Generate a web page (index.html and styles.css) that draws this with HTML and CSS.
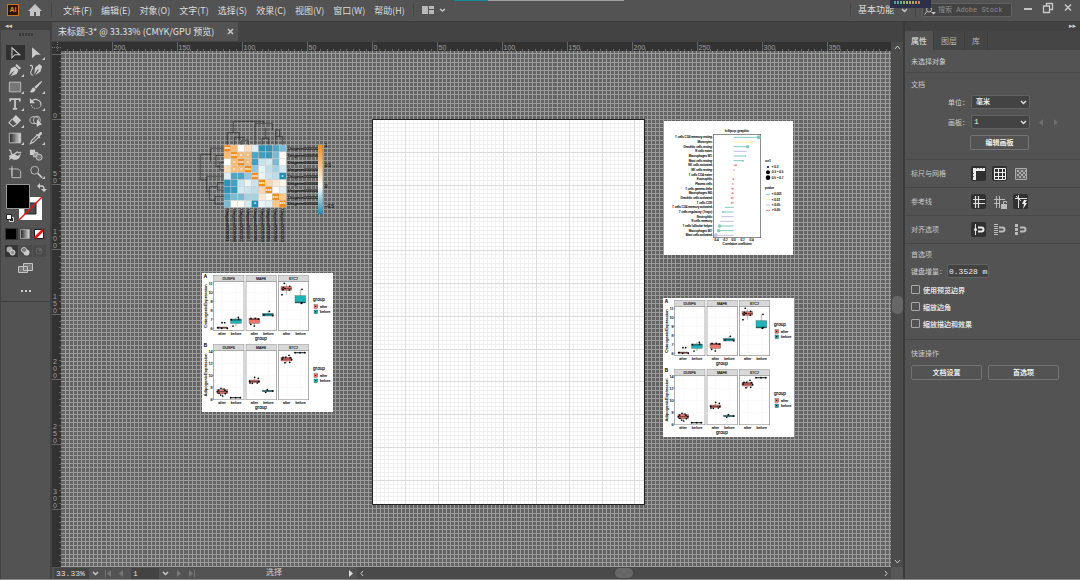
FILE: index.html
```html
<!DOCTYPE html>
<html lang="zh-CN">
<head>
    <meta charset="UTF-8">
    <meta name="viewport" content="width=device-width, initial-scale=1.0">
    <title>未标题-3</title>
    <link rel="stylesheet" href="styles.css">
</head>
<body>
    <div class="app">
        <header class="menubar">
            <span class="logo">Ai</span>
            <button class="plain home" aria-label="主页"><svg class="icon14" viewBox="0 0 14 14"><path fill="#c4c4c4" d="M7 1 0 8h2v5h4V9h2v4h4V8h2z"/></svg></button>
            <span class="divider"></span>
            <nav class="menus">
                <button>文件(F)</button>
                <button>编辑(E)</button>
                <button>对象(O)</button>
                <button>文字(T)</button>
                <button>选择(S)</button>
                <button>效果(C)</button>
                <button>视图(V)</button>
                <button>窗口(W)</button>
                <button>帮助(H)</button>
            </nav>
            <span class="divider"></span>
            <button class="plain arrange" aria-label="排列文档"><svg width="26" height="10" viewBox="0 0 26 10"><path fill="#b8b8b8" d="M1 1h6v8H1zM8 1h5v3H8zM8 5h5v4H8z"/><path class="line" stroke-width="1.5" d="m19 4 2.500 2L24 4"/></svg></button>
            <span class="spacer"></span>
            <span class="divider"></span>
            <button class="workspace-menu">基本功能</button>
            <svg class="icon7 ws-arrow" viewBox="0 0 7 7"><path class="line" stroke-width="1.5" d="m1 2 2.500 2.500L6 2"/></svg>
            <span class="divider"></span>
            <label class="search">
                <svg width="12" height="9" viewBox="0 0 12 9"><circle class="line" cx="5" cy="3.500" r="2.500"/><path class="line" d="M3 5.500.500 8.500"/><path fill="#ccc" d="M7 6h5L9.500 8.500z"/></svg>
                <input type="text" placeholder="搜索 Adobe Stock" aria-label="搜索">
            </label>
            <div class="window-buttons">
                <button aria-label="最小化"><svg class="icon12" viewBox="0 0 12 12"><path fill="#c4c4c4" d="M2 6h8v2H2z"/></svg></button>
                <button aria-label="还原"><svg class="icon12" viewBox="0 0 12 12"><path class="line" stroke-width="1.300" d="M4.500 4V1.500h6v6H8M1.500 4h6v6.500h-6z"/></svg></button>
                <button aria-label="关闭"><svg class="icon12" viewBox="0 0 12 12"><path class="line" stroke-width="1.500" d="m3 2.500 6 6M9 2.500l-6 6"/></svg></button>
            </div>
            <div class="progress-line"></div>
            <div class="meter"><span></span></div>
        </header>

        <aside class="toolbar">
            <div class="toolbar-top">◂◂</div>
            <div class="grip"></div>
            <div class="tools">
                <button class="tool selected" aria-label="选择"><svg viewBox="0 0 16 16"><path class="line" stroke-width="1.200" d="M4.500 2v11.500L8 10h5.500z"/></svg></button>
                <button class="tool more" aria-label="直接选择"><svg viewBox="0 0 16 16"><path fill="#ccc" d="M3.500 1.500V14L8 10h5.500z"/></svg></button>
                <button class="tool more" aria-label="钢笔"><svg viewBox="0 0 16 16"><path fill="#ccc" d="m10 1 5 5-2 1.500L8.500 3zM8 4l4 4-2 4.500L3 15l4-5.500L6.500 9 1 14 3.500 6z"/></svg></button>
                <button class="tool" aria-label="曲率"><svg viewBox="0 0 16 16"><path fill="#ccc" d="m12 1 3 3-2 6-6 4 4-6-1-1-4 6 1-8z"/><path class="line" stroke-width="1.300" d="M1 3c3-1 4 2 2 5s-1 6 2 6"/></svg></button>
                <button class="tool more" aria-label="矩形"><svg viewBox="0 0 16 16"><path fill="#777" stroke="#c6c6c6" d="M1.500 2.500h13v11h-13z"/></svg></button>
                <button class="tool more" aria-label="画笔"><svg viewBox="0 0 16 16"><path fill="#ccc" d="M14 1 6 8l2 2 7-8zM5.500 8.500c-3 0-2 4-5 5 3 2 7 0 7-3z"/></svg></button>
                <button class="tool more" aria-label="文字"><svg viewBox="0 0 16 16"><path class="line" stroke-width="2" d="M2.500 5V2.500h11V5M8 3v10.500M5.500 13.500h5"/></svg></button>
                <button class="tool more" aria-label="旋转"><svg viewBox="0 0 16 16"><path class="line" stroke-width="1.300" d="M3 5a6 6 0 0 1 10.500 5"/><path class="line" stroke-width="1.300" stroke-dasharray="1 1.500" d="M13.500 10A6 6 0 0 1 2.500 9"/><path fill="#ccc" d="M1 1v6h6z"/></svg></button>
                <button class="tool more" aria-label="橡皮擦"><svg viewBox="0 0 16 16"><path fill="#ccc" d="m9 1 6 6-4.500 5-6-6z"/><path fill="none" stroke="#ccc" stroke-width="1.200" d="m4.500 6-3.500 4 5 4.500 4-3"/></svg></button>
                <button class="tool" aria-label="形状生成器"><svg viewBox="0 0 16 16"><ellipse class="line" cx="6" cy="7" rx="5" ry="4"/><ellipse class="line" cx="9" cy="7" rx="4" ry="4.500"/><path fill="#ccc" d="m9 6 6 6-3 .500L9 15z"/></svg></button>
                <button class="tool more" aria-label="渐变"><svg viewBox="0 0 16 16"><defs><linearGradient id="grad"><stop stop-color="#222"/><stop offset="1" stop-color="#ddd"/></linearGradient></defs><path fill="url(#grad)" stroke="#c6c6c6" d="M1.500 2.500h13v11h-13z"/></svg></button>
                <button class="tool more" aria-label="吸管"><svg viewBox="0 0 16 16"><path class="line" stroke-width="1.300" d="m9 5-6 6-1.500 3.500L5 13l6-6"/><path fill="#ccc" d="m8 4 1-1 1.500 1 2-2.500c2-1 3 1 2 2.500L12 6l1 1.500-1 1z"/></svg></button>
                <button class="tool" aria-label="符号喷枪"><svg viewBox="0 0 16 16"><path class="line" stroke-width="1.500" d="M1 2.500c4-1 1 4 4 5s5-4 6-3 1 2 4 0"/><path fill="#ccc" d="M1 9c4-3 7-2 10 0l4-3-2 5c-2 3-7 3-9 1l-3 2 1-3z"/></svg></button>
                <button class="tool" aria-label="混合"><svg viewBox="0 0 16 16"><path fill="#ccc" d="M1 2h6v6H1z"/><path fill="#999" stroke="#ccc" d="M5 5h5v5H5z"/><circle cx="11.500" cy="10.500" r="3.500" fill="#777" stroke="#ccc"/></svg></button>
                <button class="tool" aria-label="画板"><svg viewBox="0 0 16 16"><path class="line" d="M4.500 1v11.500M1 4.500h10.500L14.500 7v7.500h-10v-10"/></svg></button>
                <button class="tool more" aria-label="缩放"><svg viewBox="0 0 16 16"><circle class="line" cx="6.500" cy="6" r="4.500"/><path class="line" stroke-width="2" d="m10 9.500 5 5"/></svg></button>
            </div>
            <!-- 填色与描边 -->
            <svg class="fill-stroke" viewBox="0 0 42 42">
                <path fill="#fff" d="M14 16h23v23H14z"/>
                <path fill="#4c4c4c" stroke="#222" d="M20 22h11v11H20z"/>
                <path stroke="#e11" stroke-width="1.500" d="m14 39 23-23"/>
                <path fill="#000" stroke="#999" d="M1.500 3.500h23v24h-23z"/>
                <path class="line" stroke-width="1.500" d="M34 5h3q2 0 2 4"/>
                <path fill="#ccc" d="m32 5 3-3v6zM36 8h6l-3 3z"/>
                <path fill="#222" stroke="#ddd" d="M4.500 36.500h4v4h-4z"/><path fill="#fff" stroke="#222" d="M1.500 33.500h5v5h-5z"/>
            </svg>
            <div class="modes">
                <button class="on" aria-label="颜色"><svg viewBox="0 0 12 12"><path d="M1 1h10v10H1z"/></svg></button>
                <button aria-label="渐变填色"><svg viewBox="0 0 12 12"><path fill="url(#grad)" stroke="#999" d="M1.500 1.500h9v9h-9z"/></svg></button>
                <button aria-label="无"><svg viewBox="0 0 12 12"><path fill="#fff" stroke="#222" d="M1.500 1.500h9v9h-9z"/><path stroke="#e11" stroke-width="2.500" d="m2 10 8-8"/></svg></button>
            </div>
            <div class="modes">
                <button class="on" aria-label="正常绘图"><svg viewBox="0 0 12 12"><circle cx="4.500" cy="4.500" r="3" fill="#aaa"/><circle cx="7.500" cy="7.500" r="2.500" fill="#999" stroke="#ddd"/></svg></button>
                <button aria-label="背面绘图"><svg viewBox="0 0 12 12"><circle cx="7.500" cy="7.500" r="3" fill="#ccc"/><circle cx="5" cy="5" r="2.500" fill="#777" stroke="#ccc"/></svg></button>
                <button aria-label="内部绘图"><svg viewBox="0 0 12 12"><circle cx="6" cy="6" r="3" fill="none" stroke="#666"/><circle cx="7" cy="5" r="1.500" fill="#666"/></svg></button>
            </div>
            <button class="plain screen-mode" aria-label="更改屏幕模式"><svg width="17" height="12" viewBox="0 0 17 12"><path fill="#777" stroke="#c4c4c4" d="M6.500 1.500h9v7h-9zM1.500 4.500h9v6h-9z"/></svg></button>
            <button class="plain dots" aria-label="编辑工具栏"><svg width="12" height="4" viewBox="0 0 12 4"><path fill="#ccc" d="M1 1h2v2H1zM5 1h2v2H5zM9 1h2v2H9z"/></svg></button>
        </aside>

        <main class="document">
            <div class="tabs">
                <div class="tab">未标题-3* @ 33.33% (CMYK/GPU 预览)<button class="plain" aria-label="关闭文档"><svg class="icon7" viewBox="0 0 7 7"><path class="line" stroke-width="1.500" d="m1 1 5 5M6 1 1 6"/></svg></button></div>
            </div>
            <div class="editor">
                <svg class="corner" viewBox="0 0 9 9"><path stroke="#777" stroke-dasharray="1 1" d="M0 5.500h9M5.500 0v9"/></svg>
                <svg class="ruler" id="rulerX"></svg>
                <svg class="ruler" id="rulerY"></svg>
                <div class="canvas" id="canvas">
                    <svg class="grid" id="grid"></svg>
                    <div class="artboard"><svg class="grid" id="artGrid"></svg></div>
                    <svg class="heatmap" id="heatmap" viewBox="0 0 435 420"></svg>
                    <svg class="boxplot first" viewBox="21 24 393 417"></svg>
                    <svg class="lollipop" id="lollipop" viewBox="27 18 387 402"></svg>
                    <svg class="boxplot second" viewBox="21 24 393 417"></svg>
                </div>
                <div class="vscroll">
                    <svg class="icon7" viewBox="0 0 7 7"><path class="line" d="m1 5 2.500-3L6 5"/></svg>
                    <span class="thumb"></span>
                    <svg class="icon7" viewBox="0 0 7 7"><path class="line" d="m1 2 2.500 3L6 2"/></svg>
                </div>
            </div>
            <footer class="statusbar">
                <input class="zoom-value" type="text" value="33.33%" aria-label="缩放比例">
                <button class="plain" aria-label="缩放列表"><svg class="icon7" viewBox="0 0 7 7"><path class="line" stroke-width="1.500" d="m1 2 2.500 2.500L6 2"/></svg></button>
                <button class="plain" aria-label="首项"><svg class="icon7" viewBox="0 0 7 7"><path fill="#777" d="M0 0h1v7H0zM6 0v7L2 3.500z"/></svg></button>
                <button class="plain" aria-label="上一项"><svg class="icon7" viewBox="0 0 7 7"><path fill="#777" d="M5 0v7L1 3.500z"/></svg></button>
                <input class="page-value" type="text" value="1" aria-label="画板导航">
                <button class="plain" aria-label="画板列表"><svg class="icon7" viewBox="0 0 7 7"><path class="line" stroke-width="1.500" d="m1 2 2.500 2.500L6 2"/></svg></button>
                <button class="plain" aria-label="下一项"><svg class="icon7" viewBox="0 0 7 7"><path fill="#777" d="M2 0v7l4-3.500z"/></svg></button>
                <button class="plain" aria-label="末项"><svg class="icon7" viewBox="0 0 7 7"><path fill="#777" d="M6 0h1v7H6zM1 0v7l4-3.500z"/></svg></button>
                <span class="status-text">选择</span>
                <button class="plain" aria-label="状态菜单"><svg class="icon7" viewBox="0 0 7 7"><path fill="#ddd" d="M2 0v7l4-3.500z"/></svg></button>
                <div class="hscroll">
                    <svg class="icon7" viewBox="0 0 7 7"><path class="line" d="M4 1 2 3.500 4 6"/></svg>
                    <span class="thumb"></span>
                    <svg class="icon7" viewBox="0 0 7 7"><path class="line" d="m3 1 2 2.500L3 6"/></svg>
                </div>
                <span class="size-corner"></span>
            </footer>
        </main>

        <aside class="panel">
            <div class="panel-top">▸▸</div>
            <div class="panel-tabs">
                <button class="active">属性</button>
                <button>图层</button>
                <button>库</button>
            </div>
            <section class="no-selection">未选择对象</section>
            <section class="doc-section">
                <h2>文档</h2>
                <div class="field">
                    <label for="unit">单位：</label>
                    <select id="unit"><option>毫米</option><option>厘米</option></select>
                </div>
                <div class="field">
                    <label for="board">画板：</label>
                    <select id="board" class="mono"><option>1</option></select>
                    <svg class="pager" width="20" height="7" viewBox="0 0 20 7"><path fill="#6e6e6e" d="M4 0v7L0 3.500zM15 0v7l4-3.500z"/></svg>
                </div>
                <button class="btn edit-board">编辑画板</button>
            </section>
            <section class="icon-row">
                <h2>标尺与网格</h2>
                <button class="on" aria-label="标尺"><svg viewBox="0 0 15 15"><path fill="#eee" d="M2 2h12v3H5v9H2z"/><path stroke="#777" d="M5.500 2v1M8.500 2v1M11.500 2v1M2 7.500h1M2 10.500h1"/></svg></button>
                <button class="on" aria-label="网格"><svg viewBox="0 0 15 15"><path fill="none" stroke="#eee" d="M2.500 2.500h11v11h-11zM2 6.500h12M2 10.500h12M6.500 2v12M10.500 2v12"/></svg></button>
                <button aria-label="透明度网格"><svg viewBox="0 0 15 15"><path fill="#666" stroke="#aaa" d="M2.500 2.500h11v11h-11z"/><path stroke="#aaa" stroke-width="2" stroke-dasharray="2 2" d="M4 5h9M4 9h9M6 7h8M6 11h8"/></svg></button>
            </section>
            <section class="icon-row">
                <h2>参考线</h2>
                <button class="on" aria-label="显示参考线"><svg viewBox="0 0 15 15"><path stroke="#ddd" stroke-width="1.200" d="M2 5.500h12M2 9.500h12M4.500 2v12M7.500 2v12"/></svg></button>
                <button aria-label="锁定参考线"><svg viewBox="0 0 15 15"><path stroke="#bbb" d="M2 5.500h11M2 9.500h6M4.500 2v12M7.500 2v12"/><path fill="#bbb" d="M9 10h6v5H9z"/><path fill="none" stroke="#bbb" d="M11.500 10V7.500h3V9"/></svg></button>
                <button class="on" aria-label="智能参考线"><svg viewBox="0 0 15 15"><path stroke="#ddd" d="M2 4.500h12M5.500 1v13M3 2l5 5"/><path fill="#eee" d="m11 6-2 4h2l-1 5 4-6h-2l2-3z"/></svg></button>
            </section>
            <section class="icon-row">
                <h2>对齐选项</h2>
                <button class="on" aria-label="对齐点"><svg viewBox="0 0 15 15"><path stroke="#ddd" d="M4.500 2v11"/><circle cx="4.500" cy="7.500" r="1.500" fill="#eee"/><path fill="none" stroke="#eee" stroke-width="2" d="M7 5.500h3.500a2 2 0 0 1 0 4H7"/></svg></button>
                <button aria-label="对齐网格"><svg viewBox="0 0 15 15"><path stroke="#bbb" stroke-width="4" stroke-dasharray="1 1" d="M4 2v12"/><path fill="none" stroke="#bbb" stroke-width="2" d="M7 5.500h3.500a2 2 0 0 1 0 4H7"/></svg></button>
                <button aria-label="对齐像素"><svg viewBox="0 0 15 15"><path fill="#bbb" d="M2 2h3v3H2zM2 6h3v3H2zM2 10h3v3H2z"/><path fill="none" stroke="#bbb" stroke-width="2" d="M7 5.500h3.500a2 2 0 0 1 0 4H7"/></svg></button>
            </section>
            <section class="prefs">
                <h2>首选项</h2>
                <div class="increment">
                    <label for="step">键盘增量：</label>
                    <input id="step" class="mono" type="text" value="0.3528 m">
                </div>
                <label class="check"><input type="checkbox">使用预览边界</label>
                <label class="check"><input type="checkbox">缩放边角</label>
                <label class="check"><input type="checkbox">缩放描边和效果</label>
            </section>
            <section class="quick">
                <h2>快速操作</h2>
                <div class="quick-buttons">
                    <button class="btn">文档设置</button>
                    <button class="btn">首选项</button>
                </div>
            </section>
        </aside>
    </div>
    <script src="script.js"></script>
</body>
</html>
```

FILE: styles.css
```css
* {
    box-sizing: border-box;
}

body {
    margin: 0;
    background: #535353;
    color: #d0d0d0;
    font-family: "Liberation Sans", "Noto Sans CJK SC", sans-serif;
    font-size: 7px;
}

button, input, select {
    font-family: inherit;
    font-size: inherit;
    color: inherit;
    margin: 0;
    padding: 0;
    border: 0;
    border-radius: 0;
    background: none;
}

svg {
    display: block;
    flex-shrink: 0;
}

h2 {
    margin: 0;
    font-size: 7px;
    line-height: 10px;
    font-weight: normal;
    color: #c8c8c8;
}

.app {
    display: grid;
    grid-template-columns: 52px 1fr 177px;
    grid-template-rows: 22px 1fr;
    height: 100vh;
    border-bottom: 1px solid #8a8a8a;
}

.line {
    fill: none;
    stroke: #c8c8c8;
}

.icon7 { width: 7px; height: 7px; }
.icon12 { width: 12px; height: 12px; }
.icon14 { width: 14px; height: 14px; }

/* 菜单栏 */
.menubar {
    position: relative;
    grid-column: 1 / -1;
    display: flex;
    align-items: center;
    padding: 0 6px 1px 7px;
    border-bottom: 1px solid #3c3c3c;
    font-family: "Noto Sans CJK SC", sans-serif;
    font-size: 9px;
    color: #dcdcdc;
}

.logo {
    width: 12px;
    height: 12px;
    border: 1px solid #c8762a;
    background: #2e1500;
    color: #f08a20;
    font: bold 7px/10px "Liberation Sans", sans-serif;
    text-align: center;
}

.home {
    margin: 0 9px;
}

.divider {
    width: 1px;
    height: 14px;
    background: #474747;
}

.menus {
    display: flex;
    gap: 9px;
    margin: 0 8px 0 11px;
}

.menus button {
    white-space: nowrap;
}

.arrange {
    margin-left: 7px;
}

.spacer {
    flex: 1;
}

.workspace-menu {
    margin: 0 7px 2px;
}

.ws-arrow {
    margin-right: 7px;
}

.search {
    display: flex;
    align-items: center;
    gap: 2px;
    width: 90px;
    height: 14px;
    margin: 0 10px 0 6px;
    padding-left: 1px;
    border: 1px solid #616161;
    background: #434343;
    border-radius: 2px;
}

.search input {
    width: 70px;
    font: 7px "Liberation Mono", "Noto Sans CJK SC", monospace;
}

.search input::placeholder {
    color: #8c8c8c;
}

.window-buttons {
    display: flex;
    gap: 8px;
    margin-bottom: 5px;
}

.progress-line {
    position: absolute;
    top: 0;
    left: 42%;
    width: 170px;
    height: 1px;
    background: linear-gradient(to right, #128c98 34px, #a0a0a0 34px);
}

.meter {
    position: absolute;
    top: 0;
    right: 149px;
    width: 41px;
    height: 8px;
    padding: 1px 4px;
    background: #2c3147;
}

.meter span {
    display: block;
    width: 27px;
    height: 3px;
    background: repeating-linear-gradient(to right, transparent 0 2px, #2c3147 2px 3px), linear-gradient(to right, #35a99a, #a5b568, #d07a48);
}

/* 工具栏 */
.toolbar {
    display: flex;
    flex-direction: column;
    align-items: center;
    border-left: 1px solid #434343;
    border-right: 2px solid #424242;
}

.toolbar-top {
    align-self: stretch;
    height: 8px;
    padding-left: 4px;
    background: #424242;
    font: 7px/8px "DejaVu Sans", sans-serif;
}

.grip {
    width: 14px;
    height: 3px;
    margin: 3px 0 9px;
    background: repeating-linear-gradient(to right, #3a3a3a 0 2px, #535353 2px 3px);
}

.tools {
    display: grid;
    grid-template-columns: 19px 19px;
    grid-auto-rows: 15px;
    gap: 2px;
}

.tool {
    position: relative;
    display: flex;
    align-items: center;
    justify-content: center;
}

.tool svg {
    width: 14px;
    height: 14px;
}

.tool.selected {
    background: #303030;
}

.tool.more::after {
    content: "";
    position: absolute;
    right: 1px;
    bottom: 0;
    border-left: 3px solid transparent;
    border-bottom: 3px solid #c8c8c8;
}

.fill-stroke {
    width: 42px;
    height: 42px;
    margin-top: 2px;
}

.modes {
    display: flex;
    gap: 1px;
    margin-top: 5px;
}

.modes button {
    width: 13px;
    height: 12px;
    background: #4b4b4b;
}

.modes button.on {
    background: #353535;
}

.modes svg {
    width: 12px;
    height: 12px;
}

.screen-mode {
    margin-top: 5px;
}

.dots {
    align-self: stretch;
    display: flex;
    justify-content: center;
    padding: 15px 0 8px;
    border-bottom: 1px solid #404040;
}

/* 文档窗口 */
.document {
    display: flex;
    flex-direction: column;
    min-width: 0;
    min-height: 0;
}

.tabs {
    height: 20px;
    background: #434343;
}

.tab {
    display: inline-flex;
    align-items: center;
    gap: 13px;
    height: 19px;
    padding: 0 4px 0 6px;
    background: #535353;
    font: 9px/19px "Noto Sans CJK SC", sans-serif;
    color: #e0e0e0;
    white-space: nowrap;
}

.editor {
    flex: 1;
    display: grid;
    grid-template-columns: 9px 1fr 12px;
    grid-template-rows: 9px 1fr;
    min-height: 0;
}

.corner {
    width: 9px;
    height: 9px;
    background: #333;
}

.ruler {
    width: 100%;
    height: 100%;
    background: #323232;
    font-size: 7px;
    fill: #a0a0a0;
    stroke: none;
}

#rulerY {
    grid-row: 2;
    grid-column: 1;
}

.ruler line {
    stroke: #666;
    shape-rendering: crispEdges;
}

.canvas {
    position: relative;
    overflow: hidden;
    grid-row: 2;
    grid-column: 2;
    background: #646464;
}

.grid {
    width: 100%;
    height: 100%;
    shape-rendering: crispEdges;
}

.canvas > .grid line {
    stroke: #9c9c9c;
}

.artboard {
    position: absolute;
    left: 311px;
    top: 68px;
    width: 273px;
    height: 386px;
    background: #fff;
    border: 1px solid #222;
}

.artboard line {
    stroke: #f0f0f0;
}

.artboard line.major {
    stroke: #dcdcdc;
}

.heatmap {
    position: absolute;
    left: 134px;
    top: 59px;
    width: 145px;
    height: 140px;
}

.boxplot {
    position: absolute;
    width: 131px;
    height: 139px;
    background: #fff;
}

.boxplot.first {
    left: 141px;
    top: 222px;
}

.boxplot.second {
    left: 602px;
    top: 247px;
}

.lollipop {
    position: absolute;
    left: 603px;
    top: 70px;
    width: 129px;
    height: 134px;
    background: #fff;
}

.vscroll {
    grid-column: 3;
    grid-row: 1 / 3;
    display: flex;
    flex-direction: column;
    align-items: center;
    justify-content: space-between;
    padding: 2px 0;
    background: #4b4b4b;
}

.thumb {
    border-radius: 5px;
    background: #676767;
}

.vscroll .thumb {
    width: 11px;
    height: 18px;
}

.statusbar {
    display: flex;
    align-items: center;
    height: 12px;
    padding-left: 2px;
    font-family: "Liberation Mono", "Noto Sans CJK SC", monospace;
}

.statusbar input {
    height: 11px;
    padding-left: 2px;
    background: #434343;
    font-size: 8px;
    color: #ddd;
}

.zoom-value { width: 35px; }
.page-value { width: 28px; }

.statusbar .plain {
    padding: 0 3px;
}

.statusbar .page-value {
    margin-left: 3px;
}

.status-text {
    width: 146px;
    padding-left: 6px;
    text-align: center;
    font-size: 8px;
    line-height: 12px;
}

.hscroll {
    flex: 1;
    display: flex;
    align-items: center;
    justify-content: space-between;
    height: 12px;
    padding: 0 2px;
    background: #4a4a4a;
}

.hscroll .thumb {
    width: 18px;
    height: 10px;
}

.size-corner {
    width: 12px;
    height: 12px;
    background: #575757;
}

/* 属性面板 */
.panel {
    border-left: 2px solid #3b3b3b;
}

.panel-top {
    height: 9px;
    padding-right: 4px;
    background: #424242;
    text-align: right;
    font: 7px/8px "DejaVu Sans", sans-serif;
}

.panel-tabs {
    display: flex;
    height: 19px;
    background: #454545;
    font-size: 8px;
    color: #b4b4b4;
}

.panel-tabs button {
    padding: 0 7px;
    border-right: 1px solid #3d3d3d;
}

.panel-tabs .active {
    padding: 0 6px;
    background: #535353;
    color: #eee;
}

.panel section {
    padding: 0 6px;
    border-bottom: 1px solid #484848;
}

.panel section:last-child {
    border-bottom: 0;
}

.panel .no-selection {
    height: 23px;
    line-height: 24px;
}

.panel .doc-section {
    padding-top: 7px;
    padding-bottom: 9px;
}

.field {
    display: flex;
    align-items: center;
    height: 14px;
    margin-top: 6px;
}

.doc-section h2 + .field {
    margin-top: 5px;
}

.field label {
    width: 59px;
    padding-right: 1px;
    text-align: right;
}

select {
    appearance: none;
    width: 59px;
    height: 14px;
    margin-left: 1px;
    padding-left: 4px;
    border: 1px solid #626262;
    border-radius: 2px;
    background: #434343 url("data:image/svg+xml,%3Csvg xmlns='http://www.w3.org/2000/svg' viewBox='0 0 7 7'%3E%3Cpath d='m1 2 2.500 2.500L6 2' fill='none' stroke='%23ddd' stroke-width='1.500'/%3E%3C/svg%3E") no-repeat right 2px center / 7px 7px;
    color: #eee;
    font-weight: bold;
    line-height: 10px;
}

.mono {
    font-family: "Liberation Mono", monospace;
    font-size: 8px;
    font-weight: normal;
}

select.mono {
    padding-left: 2px;
}

.pager {
    margin-left: 9px;
}

.btn {
    height: 15px;
    border: 1px solid #747474;
    border-radius: 2px;
    color: #eee;
    font-weight: bold;
    line-height: 11px;
}

.edit-board {
    display: block;
    width: 59px;
    margin: 6px 0 0 59px;
}

.panel .icon-row {
    display: flex;
    align-items: center;
    gap: 6px;
    height: 28px;
}

.icon-row h2 {
    width: 54px;
}

.icon-row button {
    width: 15px;
    height: 15px;
    border-radius: 2px;
}

.icon-row button.on {
    background: #303030;
}

.panel .prefs {
    height: 96px;
    padding-top: 6px;
}

.increment {
    display: flex;
    align-items: center;
    height: 14px;
    margin: 4px 0 3px;
}

.increment input {
    width: 42px;
    height: 14px;
    padding: 0 0 0 1px;
    border: 1px solid #616161;
    border-radius: 2px;
    background: #434343;
    color: #eee;
}

.increment label {
    width: 36px;
    white-space: nowrap;
}

.check {
    display: flex;
    align-items: center;
    gap: 3px;
    height: 17px;
    font-weight: bold;
    color: #e0e0e0;
}

.check input {
    appearance: none;
    width: 9px;
    height: 9px;
    border: 1px solid #a8a8a8;
    border-radius: 1px;
}

.check input:checked {
    background: #a8a8a8;
}

.quick h2 {
    padding: 9px 0 6px;
}

.quick-buttons {
    display: flex;
    gap: 6px;
}

.quick-buttons .btn {
    width: 71px;
}

/* 图表 */
.label {
    fill: #111;
    font-size: 11px;
    stroke: #111;
    stroke-width: 0.4px;
}

.label.small { font-size: 9px; }
.label.big { font-size: 14px; }
.label.title { font-size: 13px; }
.end { text-anchor: end; }
.middle { text-anchor: middle; }
.tree { fill: none; stroke: #2b2b2b; stroke-width: 2px; }
.star { fill: #fff; font-size: 15px; font-weight: bold; text-anchor: middle; }
```

FILE: script.js
```javascript
const NS = "http://www.w3.org/2000/svg";
const originX = 311, originY = 68;   // 画板左上角
const fifty = 65;                    // 50mm 对应的像素
const step = 4.1;                    // 网格间距

function add(parent, tag, attrs, text) {
    const el = document.createElementNS(NS, tag);
    for (const key in attrs) el.setAttribute(key, attrs[key]);
    if (text !== undefined) el.textContent = text;
    parent.appendChild(el);
    return el;
}

function line(parent, x1, y1, x2, y2, attrs) {
    return add(parent, "line", Object.assign({ x1, y1, x2, y2 }, attrs));
}

function drawGrid(svg, ox, oy) {
    const w = svg.clientWidth, h = svg.clientHeight;
    svg.innerHTML = "";
    for (const pass of ["minor", "major"]) {
        for (let i = Math.ceil(-ox / step); ox + i * step < w; i++) {
            if ((i % 8 === 0) !== (pass === "major")) continue;
            const x = Math.round(ox + i * step) + 0.5;
            line(svg, x, 0, x, h, { class: pass });
        }
        for (let i = Math.ceil(-oy / step); oy + i * step < h; i++) {
            if ((i % 8 === 0) !== (pass === "major")) continue;
            const y = Math.round(oy + i * step) + 0.5;
            line(svg, 0, y, w, y, { class: pass });
        }
    }
}

function drawRulers() {
    const rx = document.getElementById("rulerX");
    const ry = document.getElementById("rulerY");
    rx.innerHTML = ry.innerHTML = "";
    for (let i = -60; i < 300; i++) {
        const x = Math.round(originX + i * fifty / 10) + 0.5;
        if (x > 0 && x < rx.clientWidth) {
            line(rx, x, i % 10 === 0 ? 0 : 7, x, 9);
            if (i % 10 === 0) add(rx, "text", { x: x + 1, y: 8 }, Math.abs(i * 5));
        }
        const y = Math.round(originY + i * fifty / 10) + 0.5;
        if (y > 0 && y < ry.clientHeight) {
            line(ry, i % 10 === 0 ? 0 : 7, y, 9, y);
            const digits = String(Math.abs(i * 5)).split("");
            // 放不下的数字不画
            if (i % 10 === 0 && y > digits.length * 8) {
                digits.forEach((d, k) => {
                    add(ry, "text", { x: 1, y: y - 2 - (digits.length - 1 - k) * 7 }, d);
                });
            }
        }
    }
}

// ---- 热图 ----
const corr = [
    [1, .6, 0, .3, -.15, -.95, -.95, -.8, -.6],
    [.6, 1, .6, .6, -.8, -.85, -.9, -.6, .05],
    [0, .6, 1, .6, -.85, -.25, -.2, -.6, .05],
    [.3, .6, .6, 1, -.5, -.1, -.3, -.4, -.2],
    [-.15, -.8, -.8, -.5, 1, -.1, -.25, -.3, -1],
    [-.95, -.85, -.25, -.1, -.25, 1, .35, .2, .1],
    [-.95, -.9, -.2, -.25, -.3, .35, 1, .05, -.15],
    [-.8, -.6, -.6, -.4, -.4, .2, .05, 1, .5],
    [-.6, .05, .05, -.2, -1, -.1, -.15, .5, 1]
];

function heatColor(v) {
    const to = v > 0 ? [240, 141, 28] : [38, 140, 178];
    const t = Math.abs(v);
    return "rgb(" + to.map(c => Math.round(255 + (c - 255) * t)).join(",") + ")";
}

function drawHeatmap() {
    const svg = document.getElementById("heatmap");
    const names = ["01", "08", "02", "07", "05", "03", "06", "04", "09"];
    add(svg, "path", { class: "tree", d: "M97 105V68H133V93M115 68V34H206V40M118 105V82H149M139 105V91H160V105M180 105V40H232V60M201 105V85H221V105M211 85V53M242 105V60H254V79M242 79H263V105" });
    add(svg, "path", { class: "tree", d: "M87 115H47V154M87 136H63V170H75M87 157H75V180H87M47 133H16V210H35M87 199H35V243H42M87 218H67V240H87M67 230H43V271H60M87 260H60V282H87" });
    corr.forEach((row, r) => row.forEach((v, c) => {
        const x = 87 + c * 20.7, y = 105 + r * 20.8;
        add(svg, "rect", { x, y, width: 20.7, height: 20.8, fill: heatColor(v), stroke: "#ddd", "stroke-width": 1 });
        const one = (r !== c && r > 0 && c > 0 && r < 4 && c < 4) || v === -1;
        if (r === c || one) add(svg, "text", { class: "star", x: x + 10, y: y + 18 }, one ? "*" : "***");
    }));
    names.forEach((n, i) => {
        add(svg, "text", { class: "label title", x: 278, y: 120 + i * 20.8 }, "Unigene00000" + n);
        add(svg, "text", { class: "label title", transform: "translate(" + (93 + i * 20.7) + " 296) rotate(90)" }, "Unigene00000" + n);
    });
    const defs = add(svg, "defs", {});
    const g = add(defs, "linearGradient", { id: "scale", x2: 0, y2: 1 });
    add(g, "stop", { offset: 0, "stop-color": "#f08d1c" });
    add(g, "stop", { offset: .6, "stop-color": "#fff" });
    add(g, "stop", { offset: 1, "stop-color": "#268cb2" });
    add(svg, "rect", { x: 369, y: 105, width: 14, height: 207, fill: "url(#scale)" });
    [["1", 110], ["0.5", 172], ["0", 233], ["−0.5", 293]].forEach(t => {
        add(svg, "text", { class: "label big", x: 389, y: t[1] }, t[0]);
    });
}

// ---- 箱线图 ----
const red = "#ee756c", teal = "#1fb4b8";
const plots = [
    {
        tag: "A", title: "OsteogenicExpression", top: 31, ticks: [[11, 55], [10, 82], [9, 109], [8, 136], [7, 163], [6, 190]],
        // x, 上须, 箱顶, 中位, 箱底, 下须
        boxes: [
            [82, 186, 186, 188, 190, 190, red], [123, 157, 162, 165, 175, 183, teal],
            [178, 158, 160, 163, 175, 182, red], [219, 139, 145, 149, 153, 153, teal],
            [274, 58, 65, 71, 76, 89, red], [316, 73, 92, 112, 114, 116, teal]
        ],
        dots: [[81, 173], [89, 173], [69, 188], [80, 190], [97, 190], [109, 164], [130, 157], [131, 162], [114, 183], [168, 160], [181, 160], [190, 162], [167, 178], [178, 183], [223, 139], [207, 150], [233, 152], [268, 55], [284, 64], [265, 67], [270, 70], [264, 74], [283, 75], [261, 89], [321, 73], [321, 113], [319, 115]]
    },
    {
        tag: "B", title: "AdipogenicExpression", top: 238, ticks: [[14, 259], [12, 295], [10, 331], [8, 367], [6, 403]],
        boxes: [
            [82, 369, 374, 380, 386, 392, red], [122, 397, 397, 398, 399, 399, teal],
            [178, 340, 345, 349, 353, 355, red], [219, 374, 376, 378, 380, 382, teal],
            [274, 272, 277, 282, 288, 293, red], [316, 262, 262, 263, 264, 264, teal]
        ],
        dots: [[78, 370], [87, 372], [71, 375], [90, 376], [67, 380], [95, 380], [72, 385], [91, 386], [83, 393], [77, 390], [107, 398], [122, 398], [136, 398], [179, 337], [190, 340], [164, 349], [191, 350], [165, 354], [172, 355], [187, 354], [212, 382], [217, 374], [233, 378], [282, 271], [264, 277], [272, 277], [286, 278], [262, 282], [290, 284], [270, 293], [284, 292], [300, 263], [315, 263], [329, 263]]
    }
];

function drawBoxplot(svg) {
    for (const p of plots) {
        const t = p.top;
        add(svg, "text", { class: "label big", x: 26, y: t + 9, "font-weight": "bold" }, p.tag);
        ["DUSP6", "MAFB", "STC2"].forEach((name, i) => {
            const x = 56 + i * 97;
            add(svg, "rect", { x, y: t, width: 91, height: 18, fill: "#d8d8d8", stroke: "#666" });
            add(svg, "text", { class: "label middle", x: x + 45, y: t + 13 }, name);
            add(svg, "rect", { x, y: t + 18, width: 91, height: 148, fill: "#fff", stroke: "#888", "stroke-width": 2 });
            for (const tick of p.ticks) line(svg, x + 1, tick[1], x + 90, tick[1], { stroke: "#ececec" });
            line(svg, x + 26, t + 19, x + 26, t + 165, { stroke: "#ececec" });
            line(svg, x + 67, t + 19, x + 67, t + 165, { stroke: "#ececec" });
            add(svg, "text", { class: "label middle", x: x + 25, y: t + 180 }, "after");
            add(svg, "text", { class: "label middle", x: x + 67, y: t + 180 }, "before");
        });
        for (const tick of p.ticks) {
            add(svg, "text", { class: "label end", x: 53, y: tick[1] + 4 }, tick[0]);
            line(svg, 53, tick[1], 56, tick[1], { stroke: "#222" });
        }
        for (const [x, hi, q3, mid, q1, lo, color] of p.boxes) {
            line(svg, x, hi, x, lo, { stroke: "#222" });
            add(svg, "rect", { x: x - 16, y: q3, width: 32, height: q1 - q3, fill: color, stroke: "#444" });
            line(svg, x - 16, mid, x + 16, mid, { stroke: "#222", "stroke-width": 2 });
        }
        for (const [cx, cy] of p.dots) add(svg, "circle", { cx, cy, r: 2.6, fill: "#000" });
        add(svg, "text", { class: "label title middle", transform: "translate(35 " + (t + 92) + ") rotate(-90)" }, p.title);
        add(svg, "text", { class: "label big middle", x: 198, y: t + 193 }, "group");
        add(svg, "text", { class: "label big", x: 354, y: t + 77 }, "group");
        [["after", red], ["before", teal]].forEach(([name, color], i) => {
            const y = t + 88 + i * 16;
            add(svg, "rect", { x: 357, y, width: 11, height: 11, fill: color, stroke: "#333", "stroke-width": 1 });
            add(svg, "circle", { cx: 362, cy: y + 5, r: 2, fill: "#000" });
            add(svg, "text", { class: "label", x: 375, y: y + 9 }, name);
        });
    }
}

// ---- 棒棒糖图 ----
const G = "#7fcabb", Y = "#f7f3a5", P = "#c3bfe0", R = "#f4877d";
const cells = [
    ["T cells CD4 memory resting", 311, 6, G], ["Monocytes", 289, 5, Y], ["Dendritic cells resting", 278, 5, G],
    ["B cells naive", 274, 1, P], ["Macrophages M1", 272, 2, G], ["Mast cells resting", 264, 3, G],
    ["NK cells activated", 243, 3, R], ["NK cells resting", 237, 2, R], ["T cells CD4 naive", 236, 2, Y],
    ["Eosinophils", 235, 3, R], ["Plasma cells", 232, 2, R], ["T cells gamma delta", 232, 3, R],
    ["Macrophages M0", 232, 3, R], ["Dendritic cells activated", 230, 3, R], ["T cells CD8", 230, 3, R],
    ["T cells CD4 memory activated", 212, 2, G], ["T cells regulatory (Tregs)", 204, 3, G], ["Neutrophils", 201, 2, P],
    ["B cells memory", 196, 1, P], ["T cells follicular helper", 194, 5, G], ["Macrophages M2", 191, 5, G],
    ["Mast cells activated", 182, 6, P]
];

function drawLollipop() {
    const svg = document.getElementById("lollipop");
    add(svg, "text", { class: "label middle", x: 246, y: 51 }, "lollipop graphic");
    add(svg, "rect", { x: 175, y: 58, width: 142, height: 310, fill: "none", stroke: "#555", "stroke-width": 2 });
    cells.forEach(([name, x, r, color], i) => {
        const y = 67 + i * 14;
        add(svg, "text", { class: "label small end", x: 171, y: y + 3 }, name);
        line(svg, 172, y, 175, y, { stroke: "#333" });
        line(svg, 236, y, x, y, { stroke: color, "stroke-width": 3 });
        add(svg, "circle", { cx: x, cy: y, r, fill: color });
    });
    ["−0.4", "−0.2", "0.0", "0.2", "0.4"].forEach((v, i) => {
        const x = 182 + i * 27;
        line(svg, x, 368, x, 371, { stroke: "#333" });
        add(svg, "text", { class: "label small middle", x, y: 379 }, v);
    });
    add(svg, "text", { class: "label small middle", x: 246, y: 389 }, "Correlation coefficient");
    add(svg, "text", { class: "label small", x: 330, y: 142 }, "cor1");
    [["< 0.3", 3], ["0.3 ~ 0.5", 6], ["0.5 ~ 0.7", 7]].forEach(([name, r], i) => {
        add(svg, "circle", { cx: 339, cy: 156 + i * 16, r, fill: "#000" });
        add(svg, "text", { class: "label small", x: 350, y: 159 + i * 16 }, name);
    });
    add(svg, "text", { class: "label small", x: 330, y: 223 }, "pvalue");
    [["< 0.001", G], ["< 0.01", Y], ["< 0.05", P], ["> 0.05", R]].forEach(([name, color], i) => {
        const y = 238 + i * 16;
        line(svg, 333, y, 345, y, { stroke: color, "stroke-width": 3 });
        add(svg, "text", { class: "label small", x: 350, y: y + 3 }, name);
    });
}

function layout() {
    drawGrid(document.getElementById("grid"), originX, originY);
    drawGrid(document.getElementById("artGrid"), -1, -1);
    drawRulers();
}

drawHeatmap();
document.querySelectorAll(".boxplot").forEach(drawBoxplot);
drawLollipop();
layout();
window.addEventListener("resize", layout);
```
